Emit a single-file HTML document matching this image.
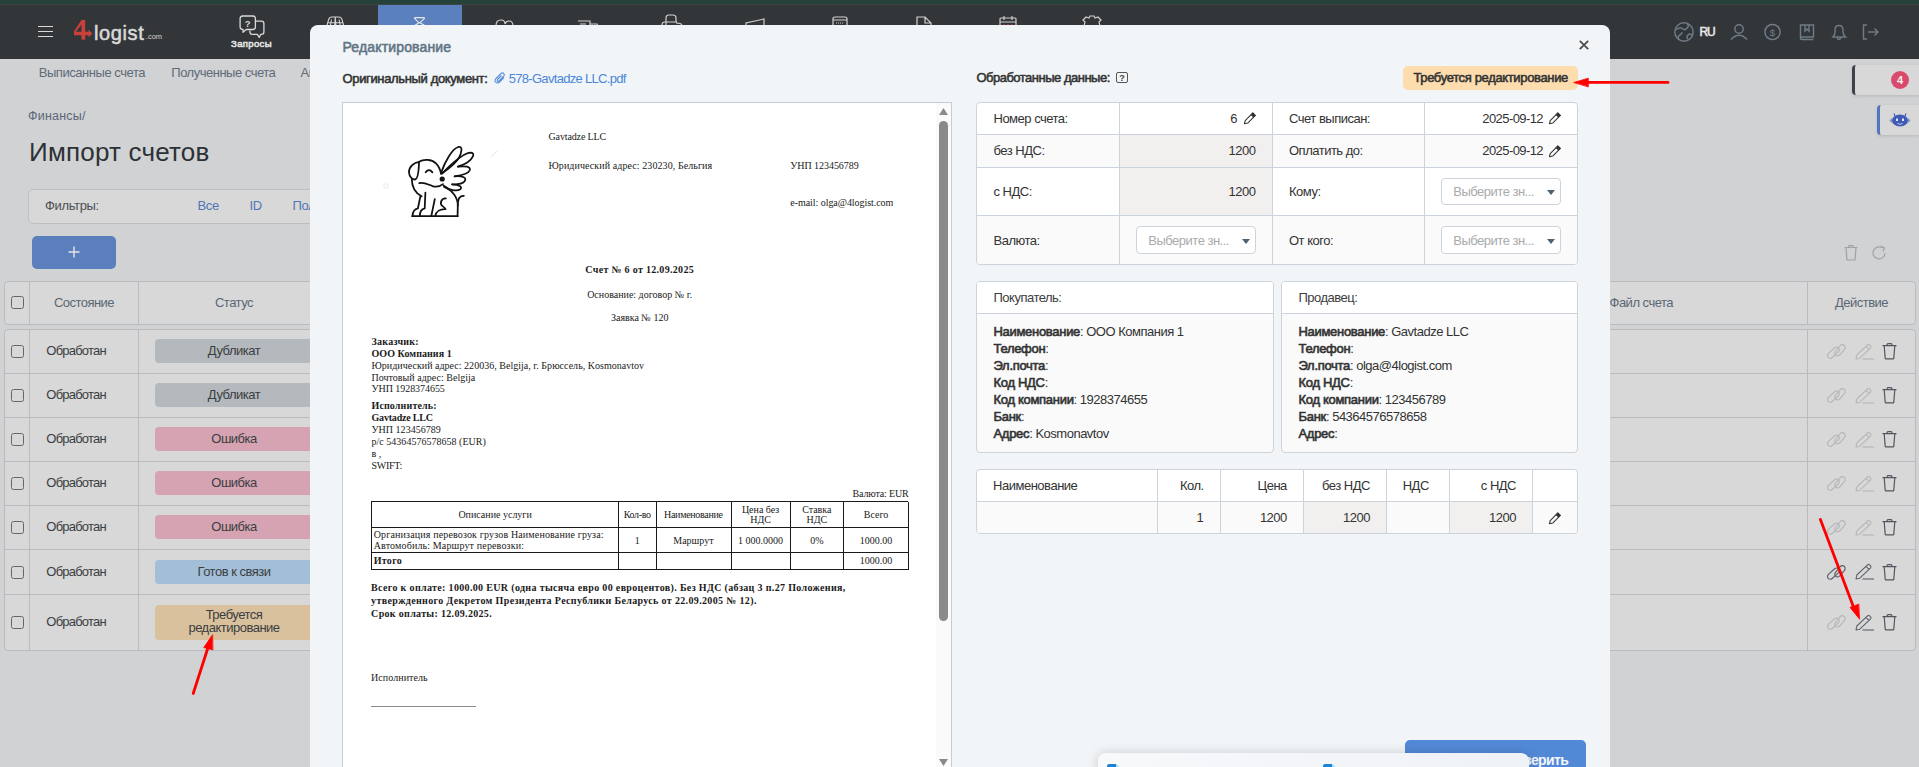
<!DOCTYPE html>
<html><head><meta charset="utf-8">
<style>
*{margin:0;padding:0;box-sizing:border-box}
html,body{width:1919px;height:767px;overflow:hidden}
body{position:relative;background:#d1d2d4;font-family:"Liberation Sans",sans-serif;color:#333}
.a{position:absolute}
.t{position:absolute;white-space:nowrap}
svg{position:absolute;overflow:visible}
</style></head><body>
<div class="a" style="left:0px;top:0px;width:1919px;height:4px;background:#26403a;"></div>
<div class="a" style="left:0px;top:4px;width:1919px;height:1px;background:#3e4543;"></div>
<div class="a" style="left:0px;top:5px;width:1919px;height:54px;background:#333639;"></div>
<div class="a" style="left:38px;top:26px;width:15px;height:1.3px;background:#d8d8d8;"></div>
<div class="a" style="left:38px;top:31px;width:15px;height:1.3px;background:#d8d8d8;"></div>
<div class="a" style="left:38px;top:36px;width:15px;height:1.3px;background:#d8d8d8;"></div>
<svg style="left:72px;top:19px;" width="22" height="22" viewBox="0 0 22 22">
<path d="M9.5 1 L13.2 1 L13.2 20.8 L9.5 20.8 L9.5 16.2 L2 16.2 L2 12.8 L9.5 12.8 L9.5 5.5 L3.8 12.8 L2 12.8 L2 12.2 Z" fill="#c8413b"/>
<path d="M13 12.8 L16.5 12.8 L16.5 10.8 L20.5 14.5 L16.5 18.2 L16.5 16.2 L13 16.2 Z" fill="#c8413b"/>
</svg>
<div class="t" style="top:22.67px;font-size:20px;line-height:20px;font-weight:400;-webkit-text-stroke:0.55px #d9d9d9;color:#d9d9d9;letter-spacing:0.6px;font-family:'Liberation Sans',sans-serif;left:94px;">logist</div>
<div class="t" style="top:33.25px;font-size:7.5px;line-height:7.5px;font-weight:400;color:#d0d0d0;letter-spacing:0px;font-family:'Liberation Sans',sans-serif;left:145.8px;">.com</div>
<svg style="left:238px;top:14px;" width="28" height="26" viewBox="0 0 28 26">
<path d="M4.6 2 L15 2 Q17.4 2 17.4 4.4 L17.4 13.1 Q17.4 15.5 15 15.5 L8.2 15.5 L5 18.3 L5 15.5 L4.6 15.5 Q2.1 15.5 2.1 13.1 L2.1 4.4 Q2.1 2 4.6 2 Z" fill="none" stroke="#d9d9d9" stroke-width="1.3" stroke-linejoin="round"/>
<path d="M17.6 7.2 L23.5 7.2 Q25.9 7.2 25.9 9.6 L25.9 18 Q25.9 20.4 23.5 20.4 L22.6 20.4 L21.3 23.4 L19.3 20.4 L14.3 20.4 Q11.9 20.4 11.9 18 L11.9 16.5" fill="none" stroke="#d9d9d9" stroke-width="1.3" stroke-linejoin="round"/>
<text x="9.7" y="12.6" font-size="9.5" font-weight="700" fill="#d9d9d9" text-anchor="middle" font-family="Liberation Sans">?</text>
</svg>
<div class="t" style="top:38.96px;font-size:9.5px;line-height:9.5px;font-weight:400;-webkit-text-stroke:0.55px #e6e6e6;color:#e6e6e6;letter-spacing:0.35px;font-family:'Liberation Sans',sans-serif;left:-348.5px;width:1200px;text-align:center;">Запросы</div>
<div class="a" style="left:378px;top:5px;width:84px;height:54px;background:#5a80bd;"></div>
<svg style="left:326px;top:16px;" width="20" height="10" viewBox="0 0 20 10"><path d="M0.8 10 L2.6 3.6 Q3.4 1 5.8 1 L12.8 1 Q15.2 1 16 3.6 L17.8 10 M9.3 1.5 L8.6 10 M9.3 1.5 L10 10 M2 6.8 L16.6 6.8 M5.5 3.5 L4.3 10 M13.1 3.5 L14.3 10" fill="none" stroke="#d6d6d6" stroke-width="1.1"/></svg>
<svg style="left:413px;top:17px;" width="14" height="9" viewBox="0 0 14 9"><path d="M1.5 1.3 Q1.5 0.6 2.4 0.6 L10.6 0.6 Q11.5 0.6 11.5 1.3 L7.6 5.2 Q6.5 6 5.4 5.2 Z M6.5 5.5 L0.8 9 M6.5 5.5 L12.6 9" fill="none" stroke="#e8e8e8" stroke-width="1.1" stroke-linejoin="round"/></svg>
<svg style="left:494px;top:18px;" width="20" height="8" viewBox="0 0 20 8"><path d="M2 8 Q2 2 7 2 Q11 2 11 6 Q12 3 15 3 Q19 3 19 8" fill="none" stroke="#d0d0d0" stroke-width="1.2"/></svg>
<svg style="left:577px;top:20px;" width="22" height="6" viewBox="0 0 22 6"><path d="M1 1 L13 1 L13 6 M3 4 L9 4 M13 4 L20 4 L21 6" fill="none" stroke="#d0d0d0" stroke-width="1.2"/></svg>
<svg style="left:661px;top:14px;" width="22" height="12" viewBox="0 0 22 12"><path d="M5 11 L5 4 Q5 1 8 1 L12 1 Q15 1 15 4 L15 8 M1 11 Q1 8 4 8 L16 8 M15 9 Q20 9 21 11" fill="none" stroke="#d0d0d0" stroke-width="1.2"/></svg>
<svg style="left:744px;top:18px;" width="22" height="8" viewBox="0 0 22 8"><path d="M2 8 L2 5 L20 1 L20 8" fill="none" stroke="#d0d0d0" stroke-width="1.2"/></svg>
<svg style="left:832px;top:16px;" width="16" height="10" viewBox="0 0 16 10"><path d="M1 10 L1 3 Q1 1 3 1 L13 1 Q15 1 15 3 L15 10 M1 4 L15 4" fill="none" stroke="#d0d0d0" stroke-width="1.2"/><path d="M4 7 L12 7" stroke="#d0d0d0" stroke-width="1" stroke-dasharray="1 1"/></svg>
<svg style="left:916px;top:16px;" width="16" height="10" viewBox="0 0 16 10"><path d="M1 10 L1 1 L9 1 L15 7 L15 10 M9 1 L9 7 L15 7" fill="none" stroke="#d0d0d0" stroke-width="1.2"/></svg>
<svg style="left:999px;top:15px;" width="18" height="11" viewBox="0 0 18 11"><path d="M1 11 L1 4 Q1 3 2 3 L16 3 Q17 3 17 4 L17 11 M1 7 L17 7 M5 1 L5 5 M13 1 L13 5" fill="none" stroke="#d0d0d0" stroke-width="1.2"/><path d="M4 10 L14 10" stroke="#c44" stroke-width="1" stroke-dasharray="2 2"/></svg>
<svg style="left:1082px;top:15px;" width="20" height="11" viewBox="0 0 20 11"><path d="M2 11 L3 7 L1 5 L4 2 L7 3 L8 1 L12 1 L13 3 L16 2 L19 5 L17 7 L18 11" fill="none" stroke="#d0d0d0" stroke-width="1.2"/></svg>
<svg style="left:1674px;top:22px;" width="20" height="20" viewBox="0 0 20 20"><circle cx="10" cy="10" r="9.2" fill="none" stroke="#6f7b85" stroke-width="1.45"/>
<path d="M2 8 Q6 4 9 7 Q11 9 14 5 Q15 3 13 1.5 M5 18 Q3 14 6 13 Q8 12 8 10 M18 13 Q16 11 14 13 Q12 15 14 17" fill="none" stroke="#6f7b85" stroke-width="1.45"/></svg>
<div class="t" style="top:26.04px;font-size:12px;line-height:12px;font-weight:400;-webkit-text-stroke:0.55px #e8e8e8;color:#e8e8e8;letter-spacing:-1.2px;font-family:'Liberation Sans',sans-serif;left:1699.5px;">RU</div>
<svg style="left:1730px;top:24px;" width="18" height="16" viewBox="0 0 18 16"><circle cx="9" cy="5" r="4.2" fill="none" stroke="#6f7b85" stroke-width="1.45"/><path d="M1 15.5 Q9 7 17 15.5" fill="none" stroke="#6f7b85" stroke-width="1.45"/></svg>
<svg style="left:1764px;top:24px;" width="17" height="16" viewBox="0 0 17 16"><circle cx="8.5" cy="8" r="7.6" fill="none" stroke="#6f7b85" stroke-width="1.45"/><text x="8.5" y="11.5" font-size="9.5" fill="#6f7b85" text-anchor="middle" font-family="Liberation Sans">$</text></svg>
<svg style="left:1799px;top:24px;" width="16" height="16" viewBox="0 0 16 16"><path d="M1.5 14 L1.5 1 L14.5 1 L14.5 13 L3 13 Q1.5 13 1.5 14.5 Q1.5 15.5 3 15.5 L14.5 15.5 M6 1 L6 7 L8 5 L10 7 L10 1" fill="none" stroke="#6f7b85" stroke-width="1.45"/></svg>
<svg style="left:1831px;top:24px;" width="16" height="17" viewBox="0 0 16 17"><path d="M2 13 Q4 11 4 8 L4 6 Q4 1.5 8 1.5 Q12 1.5 12 6 L12 8 Q12 11 14.5 13 Z M6 14 Q8 16.5 10 14" fill="none" stroke="#6f7b85" stroke-width="1.45"/></svg>
<svg style="left:1862px;top:24px;" width="17" height="16" viewBox="0 0 17 16"><path d="M5 1 L1.5 1 L1.5 15 L5 15 M6 8 L16 8 M12.5 4.5 L16 8 L12.5 11.5" fill="none" stroke="#6f7b85" stroke-width="1.45"/></svg>
<div class="t" style="top:65.70px;font-size:13px;line-height:13px;font-weight:400;color:#5e6b78;letter-spacing:-0.45px;font-family:'Liberation Sans',sans-serif;left:38.7px;">Выписанные счета</div>
<div class="t" style="top:65.70px;font-size:13px;line-height:13px;font-weight:400;color:#5e6b78;letter-spacing:-0.49px;font-family:'Liberation Sans',sans-serif;left:171.3px;">Полученные счета</div>
<div class="t" style="top:65.70px;font-size:13px;line-height:13px;font-weight:400;color:#5e6b78;letter-spacing:-0.45px;font-family:'Liberation Sans',sans-serif;left:300.5px;">Ак</div>
<div class="a" style="left:1852px;top:65px;width:67px;height:30px;background:#d8d8d8;border-radius:4px 0 0 4px;border-left:3px solid #3e404a;box-shadow:0 1px 3px rgba(0,0,0,0.12);"></div>
<div class="a" style="left:1891px;top:71px;width:18px;height:18px;border-radius:9px;background:#d94a6c;color:#f2f2f2;font:700 11px/18px Liberation Sans,sans-serif;text-align:center">4</div>
<div class="a" style="left:1877px;top:105px;width:42px;height:30px;background:#d8d8d8;border-radius:4px 0 0 4px;border-left:3px solid #4f76bf;box-shadow:0 1px 3px rgba(0,0,0,0.12);"></div>
<svg style="left:1889px;top:113px;" width="22" height="15" viewBox="0 0 22 15"><path d="M6 3 L5 0.5 M16 3 L17 0.5" stroke="#3f5bb5" stroke-width="1.2"/>
<path d="M3 5 L0.5 7.5 L3 10 Z M19 5 L21.5 7.5 L19 10 Z" fill="#7a94c9"/>
<ellipse cx="11" cy="7.5" rx="8" ry="6" fill="#3f5bb5"/>
<rect x="7" y="5.5" width="2" height="2.5" fill="#dfe6f5"/><rect x="13" y="5.5" width="2" height="2.5" fill="#dfe6f5"/>
<path d="M8.5 10.5 Q11 12 13.5 10.5" stroke="#dfe6f5" stroke-width="0.8" fill="none"/></svg>
<div class="t" style="top:110.22px;font-size:12.5px;line-height:12.5px;font-weight:400;color:#5a6774;letter-spacing:0.2px;font-family:'Liberation Sans',sans-serif;left:28px;">Финансы/</div>
<div class="t" style="top:139.29px;font-size:26px;line-height:26px;font-weight:400;color:#2c3136;letter-spacing:0.2px;font-family:'Liberation Sans',sans-serif;left:29px;">Импорт счетов</div>
<div class="a" style="left:28px;top:189px;width:1560px;height:34.5px;background:#d8d8d8;border:1px solid #bdbfc2;border-radius:5px;"></div>
<div class="t" style="top:199.20px;font-size:13px;line-height:13px;font-weight:400;color:#4b5056;letter-spacing:-0.35px;font-family:'Liberation Sans',sans-serif;left:45px;">Фильтры:</div>
<div class="t" style="top:199.20px;font-size:13px;line-height:13px;font-weight:400;color:#5276b3;letter-spacing:-0.3px;font-family:'Liberation Sans',sans-serif;left:197.5px;">Все</div>
<div class="t" style="top:199.20px;font-size:13px;line-height:13px;font-weight:400;color:#5276b3;letter-spacing:-0.3px;font-family:'Liberation Sans',sans-serif;left:249.4px;">ID</div>
<div class="t" style="top:199.20px;font-size:13px;line-height:13px;font-weight:400;color:#5276b3;letter-spacing:-0.3px;font-family:'Liberation Sans',sans-serif;left:292.4px;">Пол</div>
<div class="a" style="left:32px;top:236px;width:84px;height:33px;background:#5a7fbc;border-radius:5px;"></div>
<svg style="left:68px;top:246px;" width="12" height="12" viewBox="0 0 12 12"><path d="M6 0.5 L6 11.5 M0.5 6 L11.5 6" stroke="#e6e6e6" stroke-width="1.4"/></svg>
<svg style="left:1844px;top:245px;" width="14" height="16" viewBox="0 0 14 16"><path d="M0.5 2.5 L13.5 2.5 M4.5 2.5 L5 0.7 L9 0.7 L9.5 2.5 M2 2.5 L3 15 L11 15 L12 2.5" fill="none" stroke="#9ea3a8" stroke-width="1.2"/></svg>
<svg style="left:1872px;top:245px;" width="15" height="16" viewBox="0 0 15 16"><path d="M13 8 A6 6 0 1 1 10.5 3" fill="none" stroke="#9ea3a8" stroke-width="1.2"/><path d="M9 1 L12.5 3 L11 6.5" fill="none" stroke="#9ea3a8" stroke-width="1.2"/></svg>
<div class="a" style="left:4px;top:281px;width:1912px;height:44px;background:#d8d8d8;border:1px solid #b8bcc0;border-radius:4px;"></div>
<div class="a" style="left:29px;top:281px;width:1px;height:44px;background:#b8bcc0;"></div>
<div class="a" style="left:138px;top:281px;width:1px;height:44px;background:#b8bcc0;"></div>
<div class="a" style="left:1807px;top:281px;width:1px;height:44px;background:#b8bcc0;"></div>
<div class="a" style="left:11px;top:296px;width:13px;height:13px;background:none;border:1.2px solid #646769;border-radius:2.5px;"></div>
<div class="t" style="top:296.00px;font-size:13px;line-height:13px;font-weight:400;color:#5a6774;letter-spacing:-0.55px;font-family:'Liberation Sans',sans-serif;left:-516px;width:1200px;text-align:center;">Состояние</div>
<div class="t" style="top:296.00px;font-size:13px;line-height:13px;font-weight:400;color:#5a6774;letter-spacing:-0.5px;font-family:'Liberation Sans',sans-serif;left:-366px;width:1200px;text-align:center;">Статус</div>
<div class="t" style="top:296.00px;font-size:13px;line-height:13px;font-weight:400;color:#5a6774;letter-spacing:-0.5px;font-family:'Liberation Sans',sans-serif;left:1609.5px;">Файл счета</div>
<div class="t" style="top:296.00px;font-size:13px;line-height:13px;font-weight:400;color:#5a6774;letter-spacing:-0.5px;font-family:'Liberation Sans',sans-serif;left:1261.5px;width:1200px;text-align:center;">Действие</div>
<div class="a" style="left:4px;top:329px;width:1912px;height:322px;background:#d8d8d8;border:1px solid #b8bcc0;border-radius:4px;"></div>
<div class="a" style="left:4px;top:373px;width:1912px;height:1px;background:#b8bcc0;"></div>
<div class="a" style="left:4px;top:417px;width:1912px;height:1px;background:#b8bcc0;"></div>
<div class="a" style="left:4px;top:461px;width:1912px;height:1px;background:#b8bcc0;"></div>
<div class="a" style="left:4px;top:505px;width:1912px;height:1px;background:#b8bcc0;"></div>
<div class="a" style="left:4px;top:549px;width:1912px;height:1px;background:#b8bcc0;"></div>
<div class="a" style="left:4px;top:594px;width:1912px;height:1px;background:#b8bcc0;"></div>
<div class="a" style="left:29px;top:329px;width:1px;height:322px;background:#b8bcc0;"></div>
<div class="a" style="left:138px;top:329px;width:1px;height:322px;background:#b8bcc0;"></div>
<div class="a" style="left:1807px;top:329px;width:1px;height:322px;background:#b8bcc0;"></div>
<div class="a" style="left:11px;top:345.0px;width:13px;height:13px;background:none;border:1.2px solid #646769;border-radius:2.5px;"></div>
<div class="t" style="top:344.20px;font-size:13px;line-height:13px;font-weight:400;color:#3b3e41;letter-spacing:-0.78px;font-family:'Liberation Sans',sans-serif;left:46.3px;">Обработан</div>
<div class="a" style="left:155px;top:339.0px;width:200px;height:24px;background:#b3b9bd;border-radius:4px;"></div>
<div class="t" style="top:344.20px;font-size:13px;line-height:13px;font-weight:400;color:#3b3e41;letter-spacing:-0.5px;font-family:'Liberation Sans',sans-serif;left:-366px;width:1200px;text-align:center;">Дубликат</div>
<svg style="left:1826px;top:343.0px;" width="21" height="16" viewBox="0 0 21 16"><g fill="none" stroke="#b5b7ba" stroke-width="1.2"><rect x="-7" y="-2.8" width="14" height="5.6" rx="2.8" transform="translate(7.4 9.6) rotate(-42)"/><rect x="-6.5" y="-2.8" width="13" height="5.6" rx="2.8" transform="translate(14 7.3) rotate(-50)"/></g></svg>
<svg style="left:1855px;top:342.5px;" width="20" height="17" viewBox="0 0 20 17"><path d="M7.5 16 L19 16" stroke="#b5b7ba" stroke-width="1.1"/><path d="M1 16 L1.8 12 L12.6 1.8 Q13.6 0.9 14.6 1.8 L15.6 2.8 Q16.4 3.8 15.6 4.8 L4.8 15.2 Z M11 3.4 L14 6.4" fill="none" stroke="#b5b7ba" stroke-width="1.1" stroke-linejoin="round"/></svg>
<svg style="left:1882px;top:343.0px;" width="15" height="17" viewBox="0 0 15 17"><path d="M0.5 2.7 L14.5 2.7 M5 2.7 L5.3 1 Q5.5 0.6 6 0.6 L9 0.6 Q9.5 0.6 9.7 1 L10 2.7 M2.2 2.7 L3.2 15.2 Q3.3 15.9 4 15.9 L11 15.9 Q11.7 15.9 11.8 15.2 L12.8 2.7" fill="none" stroke="#50575e" stroke-width="1.2"/></svg>
<div class="a" style="left:11px;top:389.0px;width:13px;height:13px;background:none;border:1.2px solid #646769;border-radius:2.5px;"></div>
<div class="t" style="top:388.20px;font-size:13px;line-height:13px;font-weight:400;color:#3b3e41;letter-spacing:-0.78px;font-family:'Liberation Sans',sans-serif;left:46.3px;">Обработан</div>
<div class="a" style="left:155px;top:383.0px;width:200px;height:24px;background:#b3b9bd;border-radius:4px;"></div>
<div class="t" style="top:388.20px;font-size:13px;line-height:13px;font-weight:400;color:#3b3e41;letter-spacing:-0.5px;font-family:'Liberation Sans',sans-serif;left:-366px;width:1200px;text-align:center;">Дубликат</div>
<svg style="left:1826px;top:387.0px;" width="21" height="16" viewBox="0 0 21 16"><g fill="none" stroke="#b5b7ba" stroke-width="1.2"><rect x="-7" y="-2.8" width="14" height="5.6" rx="2.8" transform="translate(7.4 9.6) rotate(-42)"/><rect x="-6.5" y="-2.8" width="13" height="5.6" rx="2.8" transform="translate(14 7.3) rotate(-50)"/></g></svg>
<svg style="left:1855px;top:386.5px;" width="20" height="17" viewBox="0 0 20 17"><path d="M7.5 16 L19 16" stroke="#b5b7ba" stroke-width="1.1"/><path d="M1 16 L1.8 12 L12.6 1.8 Q13.6 0.9 14.6 1.8 L15.6 2.8 Q16.4 3.8 15.6 4.8 L4.8 15.2 Z M11 3.4 L14 6.4" fill="none" stroke="#b5b7ba" stroke-width="1.1" stroke-linejoin="round"/></svg>
<svg style="left:1882px;top:387.0px;" width="15" height="17" viewBox="0 0 15 17"><path d="M0.5 2.7 L14.5 2.7 M5 2.7 L5.3 1 Q5.5 0.6 6 0.6 L9 0.6 Q9.5 0.6 9.7 1 L10 2.7 M2.2 2.7 L3.2 15.2 Q3.3 15.9 4 15.9 L11 15.9 Q11.7 15.9 11.8 15.2 L12.8 2.7" fill="none" stroke="#50575e" stroke-width="1.2"/></svg>
<div class="a" style="left:11px;top:433.0px;width:13px;height:13px;background:none;border:1.2px solid #646769;border-radius:2.5px;"></div>
<div class="t" style="top:432.20px;font-size:13px;line-height:13px;font-weight:400;color:#3b3e41;letter-spacing:-0.78px;font-family:'Liberation Sans',sans-serif;left:46.3px;">Обработан</div>
<div class="a" style="left:155px;top:427.0px;width:200px;height:24px;background:#d6a3b2;border-radius:4px;"></div>
<div class="t" style="top:432.20px;font-size:13px;line-height:13px;font-weight:400;color:#3b3e41;letter-spacing:-0.5px;font-family:'Liberation Sans',sans-serif;left:-366px;width:1200px;text-align:center;">Ошибка</div>
<svg style="left:1826px;top:431.0px;" width="21" height="16" viewBox="0 0 21 16"><g fill="none" stroke="#b5b7ba" stroke-width="1.2"><rect x="-7" y="-2.8" width="14" height="5.6" rx="2.8" transform="translate(7.4 9.6) rotate(-42)"/><rect x="-6.5" y="-2.8" width="13" height="5.6" rx="2.8" transform="translate(14 7.3) rotate(-50)"/></g></svg>
<svg style="left:1855px;top:430.5px;" width="20" height="17" viewBox="0 0 20 17"><path d="M7.5 16 L19 16" stroke="#b5b7ba" stroke-width="1.1"/><path d="M1 16 L1.8 12 L12.6 1.8 Q13.6 0.9 14.6 1.8 L15.6 2.8 Q16.4 3.8 15.6 4.8 L4.8 15.2 Z M11 3.4 L14 6.4" fill="none" stroke="#b5b7ba" stroke-width="1.1" stroke-linejoin="round"/></svg>
<svg style="left:1882px;top:431.0px;" width="15" height="17" viewBox="0 0 15 17"><path d="M0.5 2.7 L14.5 2.7 M5 2.7 L5.3 1 Q5.5 0.6 6 0.6 L9 0.6 Q9.5 0.6 9.7 1 L10 2.7 M2.2 2.7 L3.2 15.2 Q3.3 15.9 4 15.9 L11 15.9 Q11.7 15.9 11.8 15.2 L12.8 2.7" fill="none" stroke="#50575e" stroke-width="1.2"/></svg>
<div class="a" style="left:11px;top:477.0px;width:13px;height:13px;background:none;border:1.2px solid #646769;border-radius:2.5px;"></div>
<div class="t" style="top:476.20px;font-size:13px;line-height:13px;font-weight:400;color:#3b3e41;letter-spacing:-0.78px;font-family:'Liberation Sans',sans-serif;left:46.3px;">Обработан</div>
<div class="a" style="left:155px;top:471.0px;width:200px;height:24px;background:#d6a3b2;border-radius:4px;"></div>
<div class="t" style="top:476.20px;font-size:13px;line-height:13px;font-weight:400;color:#3b3e41;letter-spacing:-0.5px;font-family:'Liberation Sans',sans-serif;left:-366px;width:1200px;text-align:center;">Ошибка</div>
<svg style="left:1826px;top:475.0px;" width="21" height="16" viewBox="0 0 21 16"><g fill="none" stroke="#b5b7ba" stroke-width="1.2"><rect x="-7" y="-2.8" width="14" height="5.6" rx="2.8" transform="translate(7.4 9.6) rotate(-42)"/><rect x="-6.5" y="-2.8" width="13" height="5.6" rx="2.8" transform="translate(14 7.3) rotate(-50)"/></g></svg>
<svg style="left:1855px;top:474.5px;" width="20" height="17" viewBox="0 0 20 17"><path d="M7.5 16 L19 16" stroke="#b5b7ba" stroke-width="1.1"/><path d="M1 16 L1.8 12 L12.6 1.8 Q13.6 0.9 14.6 1.8 L15.6 2.8 Q16.4 3.8 15.6 4.8 L4.8 15.2 Z M11 3.4 L14 6.4" fill="none" stroke="#b5b7ba" stroke-width="1.1" stroke-linejoin="round"/></svg>
<svg style="left:1882px;top:475.0px;" width="15" height="17" viewBox="0 0 15 17"><path d="M0.5 2.7 L14.5 2.7 M5 2.7 L5.3 1 Q5.5 0.6 6 0.6 L9 0.6 Q9.5 0.6 9.7 1 L10 2.7 M2.2 2.7 L3.2 15.2 Q3.3 15.9 4 15.9 L11 15.9 Q11.7 15.9 11.8 15.2 L12.8 2.7" fill="none" stroke="#50575e" stroke-width="1.2"/></svg>
<div class="a" style="left:11px;top:521.0px;width:13px;height:13px;background:none;border:1.2px solid #646769;border-radius:2.5px;"></div>
<div class="t" style="top:520.20px;font-size:13px;line-height:13px;font-weight:400;color:#3b3e41;letter-spacing:-0.78px;font-family:'Liberation Sans',sans-serif;left:46.3px;">Обработан</div>
<div class="a" style="left:155px;top:515.0px;width:200px;height:24px;background:#d6a3b2;border-radius:4px;"></div>
<div class="t" style="top:520.20px;font-size:13px;line-height:13px;font-weight:400;color:#3b3e41;letter-spacing:-0.5px;font-family:'Liberation Sans',sans-serif;left:-366px;width:1200px;text-align:center;">Ошибка</div>
<svg style="left:1826px;top:519.0px;" width="21" height="16" viewBox="0 0 21 16"><g fill="none" stroke="#b5b7ba" stroke-width="1.2"><rect x="-7" y="-2.8" width="14" height="5.6" rx="2.8" transform="translate(7.4 9.6) rotate(-42)"/><rect x="-6.5" y="-2.8" width="13" height="5.6" rx="2.8" transform="translate(14 7.3) rotate(-50)"/></g></svg>
<svg style="left:1855px;top:518.5px;" width="20" height="17" viewBox="0 0 20 17"><path d="M7.5 16 L19 16" stroke="#b5b7ba" stroke-width="1.1"/><path d="M1 16 L1.8 12 L12.6 1.8 Q13.6 0.9 14.6 1.8 L15.6 2.8 Q16.4 3.8 15.6 4.8 L4.8 15.2 Z M11 3.4 L14 6.4" fill="none" stroke="#b5b7ba" stroke-width="1.1" stroke-linejoin="round"/></svg>
<svg style="left:1882px;top:519.0px;" width="15" height="17" viewBox="0 0 15 17"><path d="M0.5 2.7 L14.5 2.7 M5 2.7 L5.3 1 Q5.5 0.6 6 0.6 L9 0.6 Q9.5 0.6 9.7 1 L10 2.7 M2.2 2.7 L3.2 15.2 Q3.3 15.9 4 15.9 L11 15.9 Q11.7 15.9 11.8 15.2 L12.8 2.7" fill="none" stroke="#50575e" stroke-width="1.2"/></svg>
<div class="a" style="left:11px;top:565.5px;width:13px;height:13px;background:none;border:1.2px solid #646769;border-radius:2.5px;"></div>
<div class="t" style="top:564.70px;font-size:13px;line-height:13px;font-weight:400;color:#3b3e41;letter-spacing:-0.78px;font-family:'Liberation Sans',sans-serif;left:46.3px;">Обработан</div>
<div class="a" style="left:155px;top:559.5px;width:200px;height:24px;background:#a3bed7;border-radius:4px;"></div>
<div class="t" style="top:564.70px;font-size:13px;line-height:13px;font-weight:400;color:#3b3e41;letter-spacing:-0.5px;font-family:'Liberation Sans',sans-serif;left:-366px;width:1200px;text-align:center;">Готов к связи</div>
<svg style="left:1826px;top:563.5px;" width="21" height="16" viewBox="0 0 21 16"><g fill="none" stroke="#5c636b" stroke-width="1.2"><rect x="-7" y="-2.8" width="14" height="5.6" rx="2.8" transform="translate(7.4 9.6) rotate(-42)"/><rect x="-6.5" y="-2.8" width="13" height="5.6" rx="2.8" transform="translate(14 7.3) rotate(-50)"/></g></svg>
<svg style="left:1855px;top:563.0px;" width="20" height="17" viewBox="0 0 20 17"><path d="M7.5 16 L19 16" stroke="#5c636b" stroke-width="1.1"/><path d="M1 16 L1.8 12 L12.6 1.8 Q13.6 0.9 14.6 1.8 L15.6 2.8 Q16.4 3.8 15.6 4.8 L4.8 15.2 Z M11 3.4 L14 6.4" fill="none" stroke="#5c636b" stroke-width="1.1" stroke-linejoin="round"/></svg>
<svg style="left:1882px;top:563.5px;" width="15" height="17" viewBox="0 0 15 17"><path d="M0.5 2.7 L14.5 2.7 M5 2.7 L5.3 1 Q5.5 0.6 6 0.6 L9 0.6 Q9.5 0.6 9.7 1 L10 2.7 M2.2 2.7 L3.2 15.2 Q3.3 15.9 4 15.9 L11 15.9 Q11.7 15.9 11.8 15.2 L12.8 2.7" fill="none" stroke="#50575e" stroke-width="1.2"/></svg>
<div class="a" style="left:11px;top:616.0px;width:13px;height:13px;background:none;border:1.2px solid #646769;border-radius:2.5px;"></div>
<div class="t" style="top:615.20px;font-size:13px;line-height:13px;font-weight:400;color:#3b3e41;letter-spacing:-0.78px;font-family:'Liberation Sans',sans-serif;left:46.3px;">Обработан</div>
<div class="a" style="left:155px;top:604.5px;width:200px;height:35.5px;background:#d9c19e;border-radius:4px;"></div>
<div class="t" style="top:609.00px;font-size:13px;line-height:13px;font-weight:400;color:#3b3e41;letter-spacing:-0.5px;font-family:'Liberation Sans',sans-serif;left:-366px;width:1200px;text-align:center;line-height:12px;">Требуется</div>
<div class="t" style="top:621.00px;font-size:13px;line-height:13px;font-weight:400;color:#3b3e41;letter-spacing:-0.5px;font-family:'Liberation Sans',sans-serif;left:-366px;width:1200px;text-align:center;">редактирование</div>
<svg style="left:1826px;top:614.0px;" width="21" height="16" viewBox="0 0 21 16"><g fill="none" stroke="#b5b7ba" stroke-width="1.2"><rect x="-7" y="-2.8" width="14" height="5.6" rx="2.8" transform="translate(7.4 9.6) rotate(-42)"/><rect x="-6.5" y="-2.8" width="13" height="5.6" rx="2.8" transform="translate(14 7.3) rotate(-50)"/></g></svg>
<svg style="left:1855px;top:613.5px;" width="20" height="17" viewBox="0 0 20 17"><path d="M7.5 16 L19 16" stroke="#5c636b" stroke-width="1.1"/><path d="M1 16 L1.8 12 L12.6 1.8 Q13.6 0.9 14.6 1.8 L15.6 2.8 Q16.4 3.8 15.6 4.8 L4.8 15.2 Z M11 3.4 L14 6.4" fill="none" stroke="#5c636b" stroke-width="1.1" stroke-linejoin="round"/></svg>
<svg style="left:1882px;top:614.0px;" width="15" height="17" viewBox="0 0 15 17"><path d="M0.5 2.7 L14.5 2.7 M5 2.7 L5.3 1 Q5.5 0.6 6 0.6 L9 0.6 Q9.5 0.6 9.7 1 L10 2.7 M2.2 2.7 L3.2 15.2 Q3.3 15.9 4 15.9 L11 15.9 Q11.7 15.9 11.8 15.2 L12.8 2.7" fill="none" stroke="#50575e" stroke-width="1.2"/></svg>
<div class="a" style="left:310px;top:25px;width:1300px;height:800px;background:#f1f5f8;border-radius:8px"></div>
<div class="t" style="top:40.35px;font-size:14px;line-height:14px;font-weight:400;-webkit-text-stroke:0.55px #5f7485;color:#5f7485;letter-spacing:0.15px;font-family:'Liberation Sans',sans-serif;left:342.5px;">Редактирование</div>
<svg style="left:1579px;top:40px;" width="10" height="10" viewBox="0 0 10 10"><path d="M0.8 0.8 L9.2 9.2 M9.2 0.8 L0.8 9.2" stroke="#4d4d4d" stroke-width="1.8"/></svg>
<div class="t" style="top:71.50px;font-size:13px;line-height:13px;font-weight:400;-webkit-text-stroke:0.55px #333;color:#333;letter-spacing:-0.35px;font-family:'Liberation Sans',sans-serif;left:342.5px;">Оригинальный документ:</div>
<svg style="left:494px;top:72px;" width="12" height="12" viewBox="0 0 12 12"><path d="M10 5.5 L5.5 10 Q3.5 12 1.8 10.2 Q0 8.5 2 6.5 L7 1.5 Q8.5 0.2 9.8 1.5 Q11 2.8 9.7 4.2 L5 9 Q4.2 9.7 3.5 9 Q2.8 8.3 3.5 7.5 L7.5 3.5" fill="none" stroke="#5b8fd9" stroke-width="1.1"/></svg>
<div class="t" style="top:71.50px;font-size:13px;line-height:13px;font-weight:400;color:#4a87d9;letter-spacing:-0.69px;font-family:'Liberation Sans',sans-serif;left:508.7px;">578-Gavtadze LLC.pdf</div>
<div class="a" style="left:342px;top:102px;width:610px;height:700px;background:#ffffff;border:1px solid #c8cdd5;"></div>
<div class="a" style="left:936px;top:103px;width:15px;height:700px;background:#fafafa;"></div>
<svg style="left:939px;top:108px;" width="9" height="7" viewBox="0 0 9 7"><path d="M4.5 0 L9 7 L0 7 Z" fill="#8a8a8a"/></svg>
<div class="a" style="left:939px;top:121px;width:9px;height:500px;background:#8a8a8a;border-radius:4.5px;"></div>
<svg style="left:939px;top:759px;" width="9" height="7" viewBox="0 0 9 7"><path d="M0 0 L9 0 L4.5 7 Z" fill="#8a8a8a"/></svg>
<div class="t" style="top:71.00px;font-size:13px;line-height:13px;font-weight:400;-webkit-text-stroke:0.55px #333;color:#333;letter-spacing:-0.5px;font-family:'Liberation Sans',sans-serif;left:976.4px;">Обработанные данные:</div>
<div class="a" style="left:1116.2px;top:72.2px;width:11.7px;height:11.3px;background:none;border:1px solid #555;border-radius:2px;"></div>
<div class="t" style="top:73.88px;font-size:9px;line-height:9px;font-weight:700;color:#444;letter-spacing:0px;font-family:'Liberation Sans',sans-serif;left:522px;width:1200px;text-align:center;">?</div>
<div class="a" style="left:1403px;top:66px;width:175px;height:24px;background:#fddcae;border-radius:5px;"></div>
<div class="t" style="top:71.10px;font-size:13px;line-height:13px;font-weight:400;-webkit-text-stroke:0.55px #333;color:#333;letter-spacing:-0.35px;font-family:'Liberation Sans',sans-serif;left:1413.4px;">Требуется редактирование</div>
<div class="a" style="left:976px;top:102px;width:602px;height:163px;border:1px solid #cdd3dc;border-radius:4px;overflow:hidden;background:#fff">
<div class="a" style="left:0.0px;top:32.0px;width:602.0px;height:33.0px;background:#fafafa"></div>
<div class="a" style="left:0.0px;top:113.0px;width:602.0px;height:50.0px;background:#fafafa"></div>
<div class="a" style="left:143.0px;top:32.0px;width:153.0px;height:81.0px;background:#f1f0ef"></div>
<div class="a" style="left:0.0px;top:31.0px;width:602.0px;height:1.0px;background:#cdd3dc"></div>
<div class="a" style="left:0.0px;top:64.0px;width:602.0px;height:1.0px;background:#cdd3dc"></div>
<div class="a" style="left:0.0px;top:112.0px;width:602.0px;height:1.0px;background:#cdd3dc"></div>
<div class="a" style="left:142.0px;top:0.0px;width:1.0px;height:163.0px;background:#cdd3dc"></div>
<div class="a" style="left:295.0px;top:0.0px;width:1.0px;height:163.0px;background:#cdd3dc"></div>
<div class="a" style="left:447.0px;top:0.0px;width:1.0px;height:163.0px;background:#cdd3dc"></div>
</div>
<div class="t" style="top:111.70px;font-size:13px;line-height:13px;font-weight:400;color:#333;letter-spacing:-0.5px;font-family:'Liberation Sans',sans-serif;left:993.5px;">Номер счета:</div>
<div class="t" style="top:111.70px;font-size:13px;line-height:13px;font-weight:400;color:#333;letter-spacing:-0.5px;font-family:'Liberation Sans',sans-serif;left:1289px;">Счет выписан:</div>
<div class="t" style="top:144.30px;font-size:13px;line-height:13px;font-weight:400;color:#333;letter-spacing:-0.5px;font-family:'Liberation Sans',sans-serif;left:993.5px;">без НДС:</div>
<div class="t" style="top:144.30px;font-size:13px;line-height:13px;font-weight:400;color:#333;letter-spacing:-0.5px;font-family:'Liberation Sans',sans-serif;left:1289px;">Оплатить до:</div>
<div class="t" style="top:185.00px;font-size:13px;line-height:13px;font-weight:400;color:#333;letter-spacing:-0.5px;font-family:'Liberation Sans',sans-serif;left:993.5px;">с НДС:</div>
<div class="t" style="top:185.00px;font-size:13px;line-height:13px;font-weight:400;color:#333;letter-spacing:-0.5px;font-family:'Liberation Sans',sans-serif;left:1289px;">Кому:</div>
<div class="t" style="top:233.50px;font-size:13px;line-height:13px;font-weight:400;color:#333;letter-spacing:-0.5px;font-family:'Liberation Sans',sans-serif;left:993.5px;">Валюта:</div>
<div class="t" style="top:233.50px;font-size:13px;line-height:13px;font-weight:400;color:#333;letter-spacing:-0.5px;font-family:'Liberation Sans',sans-serif;left:1289px;">От кого:</div>
<div class="t" style="top:111.70px;font-size:13px;line-height:13px;font-weight:400;color:#333;letter-spacing:0px;font-family:'Liberation Sans',sans-serif;right:681.5px;">6</div>
<svg style="left:1244px;top:113.0px;" width="13" height="12" viewBox="0 0 13 12"><g transform="scale(0.93)"><path d="M0.5 11.5 L1.3 8.1 L9.5 -0.1 L12.2 2.6 L4 10.8 Z" fill="none" stroke="#333" stroke-width="1.15" stroke-linejoin="round"/><path d="M7.5 1.9 L9.5 -0.1 L12.2 2.6 L10.2 4.6 Z" fill="#333" stroke="#333" stroke-width="0.9" stroke-linejoin="round"/></g></svg>
<div class="t" style="top:144.30px;font-size:13px;line-height:13px;font-weight:400;color:#333;letter-spacing:-0.5px;font-family:'Liberation Sans',sans-serif;right:663.5px;">1200</div>
<div class="t" style="top:185.00px;font-size:13px;line-height:13px;font-weight:400;color:#333;letter-spacing:-0.5px;font-family:'Liberation Sans',sans-serif;right:663.5px;">1200</div>
<div class="t" style="top:111.70px;font-size:13px;line-height:13px;font-weight:400;color:#333;letter-spacing:-0.58px;font-family:'Liberation Sans',sans-serif;right:376px;">2025-09-12</div>
<svg style="left:1549px;top:113.0px;" width="13" height="12" viewBox="0 0 13 12"><g transform="scale(0.93)"><path d="M0.5 11.5 L1.3 8.1 L9.5 -0.1 L12.2 2.6 L4 10.8 Z" fill="none" stroke="#333" stroke-width="1.15" stroke-linejoin="round"/><path d="M7.5 1.9 L9.5 -0.1 L12.2 2.6 L10.2 4.6 Z" fill="#333" stroke="#333" stroke-width="0.9" stroke-linejoin="round"/></g></svg>
<div class="t" style="top:144.30px;font-size:13px;line-height:13px;font-weight:400;color:#333;letter-spacing:-0.58px;font-family:'Liberation Sans',sans-serif;right:376px;">2025-09-12</div>
<svg style="left:1549px;top:145.59999999999997px;" width="13" height="12" viewBox="0 0 13 12"><g transform="scale(0.93)"><path d="M0.5 11.5 L1.3 8.1 L9.5 -0.1 L12.2 2.6 L4 10.8 Z" fill="none" stroke="#333" stroke-width="1.15" stroke-linejoin="round"/><path d="M7.5 1.9 L9.5 -0.1 L12.2 2.6 L10.2 4.6 Z" fill="#333" stroke="#333" stroke-width="0.9" stroke-linejoin="round"/></g></svg>
<div class="a" style="left:1136px;top:226.3px;width:120px;height:27.5px;background:#fff;border:1px solid #ccd3dc;border-radius:4px;"></div>
<div class="t" style="top:233.65px;font-size:13px;line-height:13px;font-weight:400;color:#a9abad;letter-spacing:-0.5px;font-family:'Liberation Sans',sans-serif;left:1148.3px;">Выберите зн...</div>
<svg style="left:1242px;top:239.05px;" width="8" height="5" viewBox="0 0 8 5"><path d="M0 0 L8 0 L4 5 Z" fill="#4f6272"/></svg>
<div class="a" style="left:1441px;top:177.5px;width:120px;height:27.5px;background:#fff;border:1px solid #ccd3dc;border-radius:4px;"></div>
<div class="t" style="top:184.85px;font-size:13px;line-height:13px;font-weight:400;color:#a9abad;letter-spacing:-0.5px;font-family:'Liberation Sans',sans-serif;left:1453.3px;">Выберите зн...</div>
<svg style="left:1547px;top:190.25px;" width="8" height="5" viewBox="0 0 8 5"><path d="M0 0 L8 0 L4 5 Z" fill="#4f6272"/></svg>
<div class="a" style="left:1441px;top:226.3px;width:120px;height:27.5px;background:#fff;border:1px solid #ccd3dc;border-radius:4px;"></div>
<div class="t" style="top:233.65px;font-size:13px;line-height:13px;font-weight:400;color:#a9abad;letter-spacing:-0.5px;font-family:'Liberation Sans',sans-serif;left:1453.3px;">Выберите зн...</div>
<svg style="left:1547px;top:239.05px;" width="8" height="5" viewBox="0 0 8 5"><path d="M0 0 L8 0 L4 5 Z" fill="#4f6272"/></svg>
<div class="a" style="left:976px;top:281px;width:298px;height:172px;border:1px solid #cdd3dc;border-radius:4px;overflow:hidden;background:#fafafa"><div class="a" style="left:0;top:0;width:100%;height:32px;background:#fff;border-bottom:1px solid #cdd3dc"></div></div>
<div class="t" style="top:290.70px;font-size:13px;line-height:13px;font-weight:400;color:#3d3d3d;letter-spacing:-0.5px;font-family:'Liberation Sans',sans-serif;left:993.5px;">Покупатель:</div>
<div class="t" style="left:993.5px;top:324.60px;font-size:13px;line-height:13px;color:#333;letter-spacing:-0.5px;font-family:Liberation Sans,sans-serif"><b style="font-weight:400;-webkit-text-stroke:0.6px #333;letter-spacing:-0.3px">Наименование</b>: ООО Компания 1</div>
<div class="t" style="left:993.5px;top:341.65px;font-size:13px;line-height:13px;color:#333;letter-spacing:-0.5px;font-family:Liberation Sans,sans-serif"><b style="font-weight:400;-webkit-text-stroke:0.6px #333;letter-spacing:-0.3px">Телефон</b>:</div>
<div class="t" style="left:993.5px;top:358.70px;font-size:13px;line-height:13px;color:#333;letter-spacing:-0.5px;font-family:Liberation Sans,sans-serif"><b style="font-weight:400;-webkit-text-stroke:0.6px #333;letter-spacing:-0.3px">Эл.почта</b>:</div>
<div class="t" style="left:993.5px;top:375.75px;font-size:13px;line-height:13px;color:#333;letter-spacing:-0.5px;font-family:Liberation Sans,sans-serif"><b style="font-weight:400;-webkit-text-stroke:0.6px #333;letter-spacing:-0.3px">Код НДС</b>:</div>
<div class="t" style="left:993.5px;top:392.80px;font-size:13px;line-height:13px;color:#333;letter-spacing:-0.5px;font-family:Liberation Sans,sans-serif"><b style="font-weight:400;-webkit-text-stroke:0.6px #333;letter-spacing:-0.3px">Код компании</b>: 1928374655</div>
<div class="t" style="left:993.5px;top:409.85px;font-size:13px;line-height:13px;color:#333;letter-spacing:-0.5px;font-family:Liberation Sans,sans-serif"><b style="font-weight:400;-webkit-text-stroke:0.6px #333;letter-spacing:-0.3px">Банк</b>:</div>
<div class="t" style="left:993.5px;top:426.90px;font-size:13px;line-height:13px;color:#333;letter-spacing:-0.5px;font-family:Liberation Sans,sans-serif"><b style="font-weight:400;-webkit-text-stroke:0.6px #333;letter-spacing:-0.3px">Адрес</b>: Kosmonavtov</div>
<div class="a" style="left:1281px;top:281px;width:297px;height:172px;border:1px solid #cdd3dc;border-radius:4px;overflow:hidden;background:#fafafa"><div class="a" style="left:0;top:0;width:100%;height:32px;background:#fff;border-bottom:1px solid #cdd3dc"></div></div>
<div class="t" style="top:290.70px;font-size:13px;line-height:13px;font-weight:400;color:#3d3d3d;letter-spacing:-0.5px;font-family:'Liberation Sans',sans-serif;left:1298.5px;">Продавец:</div>
<div class="t" style="left:1298.5px;top:324.60px;font-size:13px;line-height:13px;color:#333;letter-spacing:-0.5px;font-family:Liberation Sans,sans-serif"><b style="font-weight:400;-webkit-text-stroke:0.6px #333;letter-spacing:-0.3px">Наименование</b>: Gavtadze LLC</div>
<div class="t" style="left:1298.5px;top:341.65px;font-size:13px;line-height:13px;color:#333;letter-spacing:-0.5px;font-family:Liberation Sans,sans-serif"><b style="font-weight:400;-webkit-text-stroke:0.6px #333;letter-spacing:-0.3px">Телефон</b>:</div>
<div class="t" style="left:1298.5px;top:358.70px;font-size:13px;line-height:13px;color:#333;letter-spacing:-0.5px;font-family:Liberation Sans,sans-serif"><b style="font-weight:400;-webkit-text-stroke:0.6px #333;letter-spacing:-0.3px">Эл.почта</b>: olga@4logist.com</div>
<div class="t" style="left:1298.5px;top:375.75px;font-size:13px;line-height:13px;color:#333;letter-spacing:-0.5px;font-family:Liberation Sans,sans-serif"><b style="font-weight:400;-webkit-text-stroke:0.6px #333;letter-spacing:-0.3px">Код НДС</b>:</div>
<div class="t" style="left:1298.5px;top:392.80px;font-size:13px;line-height:13px;color:#333;letter-spacing:-0.5px;font-family:Liberation Sans,sans-serif"><b style="font-weight:400;-webkit-text-stroke:0.6px #333;letter-spacing:-0.3px">Код компании</b>: 123456789</div>
<div class="t" style="left:1298.5px;top:409.85px;font-size:13px;line-height:13px;color:#333;letter-spacing:-0.5px;font-family:Liberation Sans,sans-serif"><b style="font-weight:400;-webkit-text-stroke:0.6px #333;letter-spacing:-0.3px">Банк</b>: 54364576578658</div>
<div class="t" style="left:1298.5px;top:426.90px;font-size:13px;line-height:13px;color:#333;letter-spacing:-0.5px;font-family:Liberation Sans,sans-serif"><b style="font-weight:400;-webkit-text-stroke:0.6px #333;letter-spacing:-0.3px">Адрес</b>:</div>
<div class="a" style="left:976px;top:469px;width:602.0px;height:65.0px;border:1px solid #cdd3dc;border-radius:4px;overflow:hidden;background:#fff">
<div class="a" style="left:0.0px;top:32.0px;width:602.0px;height:33.0px;background:#fafafa"></div>
<div class="a" style="left:327.0px;top:32.0px;width:83.0px;height:33.0px;background:#f1f0ef"></div>
<div class="a" style="left:473.0px;top:32.0px;width:83.0px;height:33.0px;background:#f1f0ef"></div>
<div class="a" style="left:0.0px;top:31.0px;width:602.0px;height:1.0px;background:#cdd3dc"></div>
<div class="a" style="left:180.0px;top:0.0px;width:1.0px;height:65.0px;background:#cdd3dc"></div>
<div class="a" style="left:243.0px;top:0.0px;width:1.0px;height:65.0px;background:#cdd3dc"></div>
<div class="a" style="left:326.0px;top:0.0px;width:1.0px;height:65.0px;background:#cdd3dc"></div>
<div class="a" style="left:409.0px;top:0.0px;width:1.0px;height:65.0px;background:#cdd3dc"></div>
<div class="a" style="left:472.0px;top:0.0px;width:1.0px;height:65.0px;background:#cdd3dc"></div>
<div class="a" style="left:555.0px;top:0.0px;width:1.0px;height:65.0px;background:#cdd3dc"></div>
</div>
<div class="t" style="top:479.30px;font-size:13px;line-height:13px;font-weight:400;color:#333;letter-spacing:-0.48px;font-family:'Liberation Sans',sans-serif;left:993px;">Наименование</div>
<div class="t" style="top:479.30px;font-size:13px;line-height:13px;font-weight:400;color:#333;letter-spacing:-0.5px;font-family:'Liberation Sans',sans-serif;right:715.3px;">Кол.</div>
<div class="t" style="top:479.30px;font-size:13px;line-height:13px;font-weight:400;color:#333;letter-spacing:-0.5px;font-family:'Liberation Sans',sans-serif;right:632.2px;">Цена</div>
<div class="t" style="top:479.30px;font-size:13px;line-height:13px;font-weight:400;color:#333;letter-spacing:-0.5px;font-family:'Liberation Sans',sans-serif;right:549.0999999999999px;">без НДС</div>
<div class="t" style="top:479.30px;font-size:13px;line-height:13px;font-weight:400;color:#333;letter-spacing:-0.5px;font-family:'Liberation Sans',sans-serif;left:1402.7px;">НДС</div>
<div class="t" style="top:479.30px;font-size:13px;line-height:13px;font-weight:400;color:#333;letter-spacing:-0.5px;font-family:'Liberation Sans',sans-serif;right:403px;">с НДС</div>
<div class="t" style="top:511.00px;font-size:13px;line-height:13px;font-weight:400;color:#333;letter-spacing:0px;font-family:'Liberation Sans',sans-serif;right:715.3px;">1</div>
<div class="t" style="top:511.00px;font-size:13px;line-height:13px;font-weight:400;color:#333;letter-spacing:-0.5px;font-family:'Liberation Sans',sans-serif;right:632.2px;">1200</div>
<div class="t" style="top:511.00px;font-size:13px;line-height:13px;font-weight:400;color:#333;letter-spacing:-0.5px;font-family:'Liberation Sans',sans-serif;right:549.0999999999999px;">1200</div>
<div class="t" style="top:511.00px;font-size:13px;line-height:13px;font-weight:400;color:#333;letter-spacing:-0.5px;font-family:'Liberation Sans',sans-serif;right:403px;">1200</div>
<svg style="left:1549px;top:512.6px;" width="13" height="12" viewBox="0 0 13 12"><g transform="scale(0.93)"><path d="M0.5 11.5 L1.3 8.1 L9.5 -0.1 L12.2 2.6 L4 10.8 Z" fill="none" stroke="#333" stroke-width="1.15" stroke-linejoin="round"/><path d="M7.5 1.9 L9.5 -0.1 L12.2 2.6 L10.2 4.6 Z" fill="#333" stroke="#333" stroke-width="0.9" stroke-linejoin="round"/></g></svg>
<div class="a" style="left:1405px;top:740px;width:181px;height:40px;background:#5289d7;border-radius:5px;"></div>
<div class="t" style="top:752.65px;font-size:14px;line-height:14px;font-weight:700;color:#f2f6fb;letter-spacing:-0.6px;font-family:'Liberation Sans',sans-serif;right:350.70000000000005px;">Проверить</div>
<div class="a" style="left:1098px;top:753px;width:431px;height:40px;border-radius:8px;background:linear-gradient(90deg,#f7f9fb,#eef1f6);box-shadow:0 0 12px rgba(0,0,0,0.16)"></div>
<div class="a" style="left:1107px;top:764px;width:9px;height:6px;background:#1f82d2;border-radius:2px 0 0 0;"></div>
<svg style="left:1116px;top:764px;" width="4" height="4" viewBox="0 0 4 4"><path d="M0 0 L0.5 0 L4 3.5 L4 4 L0 4 Z" fill="#9fe3f7"/></svg>
<div class="a" style="left:1323px;top:764px;width:9px;height:6px;background:#1f82d2;border-radius:2px 0 0 0;"></div>
<svg style="left:1332px;top:764px;" width="4" height="4" viewBox="0 0 4 4"><path d="M0 0 L0.5 0 L4 3.5 L4 4 L0 4 Z" fill="#9fe3f7"/></svg>
<div class="t" style="top:131.62px;font-size:10px;line-height:10px;font-weight:400;color:#1a1a1a;letter-spacing:-0.13px;font-family:'Liberation Serif',serif;left:548.5px;">Gavtadze LLC</div>
<div class="t" style="top:160.62px;font-size:10px;line-height:10px;font-weight:400;color:#1a1a1a;letter-spacing:0.08px;font-family:'Liberation Serif',serif;left:548.5px;">Юридический адрес: 230230, Бельгия</div>
<div class="t" style="top:160.62px;font-size:10px;line-height:10px;font-weight:400;color:#1a1a1a;letter-spacing:-0.05px;font-family:'Liberation Serif',serif;left:790.3px;">УНП 123456789</div>
<div class="t" style="top:197.62px;font-size:10px;line-height:10px;font-weight:400;color:#1a1a1a;letter-spacing:-0.05px;font-family:'Liberation Serif',serif;left:790.3px;">e-mail: olga@4logist.com</div>
<div class="t" style="top:265.12px;font-size:10px;line-height:10px;font-weight:700;color:#1a1a1a;letter-spacing:0.31px;font-family:'Liberation Serif',serif;left:39.700000000000045px;width:1200px;text-align:center;">Счет № 6 от 12.09.2025</div>
<div class="t" style="top:289.52px;font-size:10px;line-height:10px;font-weight:400;color:#1a1a1a;letter-spacing:0px;font-family:'Liberation Serif',serif;left:39.700000000000045px;width:1200px;text-align:center;">Основание: договор № г.</div>
<div class="t" style="top:313.02px;font-size:10px;line-height:10px;font-weight:400;color:#1a1a1a;letter-spacing:0px;font-family:'Liberation Serif',serif;left:39.700000000000045px;width:1200px;text-align:center;">Заявка № 120</div>
<div class="t" style="top:336.82px;font-size:10px;line-height:10px;font-weight:700;color:#1a1a1a;letter-spacing:0.25px;font-family:'Liberation Serif',serif;left:371.5px;">Заказчик:</div>
<div class="t" style="top:348.73px;font-size:10px;line-height:10px;font-weight:700;color:#1a1a1a;letter-spacing:0.06px;font-family:'Liberation Serif',serif;left:371.5px;">ООО Компания 1</div>
<div class="t" style="top:360.62px;font-size:10px;line-height:10px;font-weight:400;color:#1a1a1a;letter-spacing:0.02px;font-family:'Liberation Serif',serif;left:371.5px;">Юридический адрес: 220036, Belgija, г. Брюссель, Kosmonavtov</div>
<div class="t" style="top:372.73px;font-size:10px;line-height:10px;font-weight:400;color:#1a1a1a;letter-spacing:0.02px;font-family:'Liberation Serif',serif;left:371.5px;">Почтовый адрес: Belgija</div>
<div class="t" style="top:384.23px;font-size:10px;line-height:10px;font-weight:400;color:#1a1a1a;letter-spacing:-0.05px;font-family:'Liberation Serif',serif;left:371.5px;">УНП 1928374655</div>
<div class="t" style="top:401.32px;font-size:10px;line-height:10px;font-weight:700;color:#1a1a1a;letter-spacing:0.13px;font-family:'Liberation Serif',serif;left:371.5px;">Исполнитель:</div>
<div class="t" style="top:413.43px;font-size:10px;line-height:10px;font-weight:700;color:#1a1a1a;letter-spacing:-0.19px;font-family:'Liberation Serif',serif;left:371.5px;">Gavtadze LLC</div>
<div class="t" style="top:424.93px;font-size:10px;line-height:10px;font-weight:400;color:#1a1a1a;letter-spacing:0.02px;font-family:'Liberation Serif',serif;left:371.5px;">УНП 123456789</div>
<div class="t" style="top:437.43px;font-size:10px;line-height:10px;font-weight:400;color:#1a1a1a;letter-spacing:0.02px;font-family:'Liberation Serif',serif;left:371.5px;">р/с 54364576578658 (EUR)</div>
<div class="t" style="top:448.82px;font-size:10px;line-height:10px;font-weight:400;color:#1a1a1a;letter-spacing:0.02px;font-family:'Liberation Serif',serif;left:371.5px;">в ,</div>
<div class="t" style="top:460.73px;font-size:10px;line-height:10px;font-weight:400;color:#1a1a1a;letter-spacing:-0.3px;font-family:'Liberation Serif',serif;left:371.5px;">SWIFT:</div>
<div class="t" style="top:489.12px;font-size:10px;line-height:10px;font-weight:400;color:#1a1a1a;letter-spacing:-0.15px;font-family:'Liberation Serif',serif;right:1010.4px;">Валюта: EUR</div>
<div class="a" style="left:371.1px;top:501.4px;width:536.9px;height:1.1px;background:#1a1a1a;"></div>
<div class="a" style="left:371.1px;top:527.1px;width:536.9px;height:1.1px;background:#1a1a1a;"></div>
<div class="a" style="left:371.1px;top:552.2px;width:536.9px;height:1.1px;background:#1a1a1a;"></div>
<div class="a" style="left:371.1px;top:569.1px;width:536.9px;height:1.1px;background:#1a1a1a;"></div>
<div class="a" style="left:370.6px;top:501.9px;width:1.1px;height:67.70000000000005px;background:#1a1a1a;"></div>
<div class="a" style="left:617.7px;top:501.9px;width:1.1px;height:67.70000000000005px;background:#1a1a1a;"></div>
<div class="a" style="left:655.7px;top:501.9px;width:1.1px;height:67.70000000000005px;background:#1a1a1a;"></div>
<div class="a" style="left:730.7px;top:501.9px;width:1.1px;height:67.70000000000005px;background:#1a1a1a;"></div>
<div class="a" style="left:789.6px;top:501.9px;width:1.1px;height:67.70000000000005px;background:#1a1a1a;"></div>
<div class="a" style="left:843.0px;top:501.9px;width:1.1px;height:67.70000000000005px;background:#1a1a1a;"></div>
<div class="a" style="left:907.5px;top:501.9px;width:1.1px;height:67.70000000000005px;background:#1a1a1a;"></div>
<div class="t" style="top:510.12px;font-size:10px;line-height:10px;font-weight:400;color:#1a1a1a;letter-spacing:0px;font-family:'Liberation Serif',serif;left:-104.89999999999998px;width:1200px;text-align:center;">Описание услуги</div>
<div class="t" style="top:510.12px;font-size:10px;line-height:10px;font-weight:400;color:#1a1a1a;letter-spacing:-0.35px;font-family:'Liberation Serif',serif;left:37.200000000000045px;width:1200px;text-align:center;">Кол-во</div>
<div class="t" style="top:510.12px;font-size:10px;line-height:10px;font-weight:400;color:#1a1a1a;letter-spacing:-0.3px;font-family:'Liberation Serif',serif;left:93.39999999999998px;width:1200px;text-align:center;">Наименование</div>
<div class="t" style="top:504.92px;font-size:10px;line-height:10px;font-weight:400;color:#1a1a1a;letter-spacing:0px;font-family:'Liberation Serif',serif;left:160.60000000000002px;width:1200px;text-align:center;">Цена без</div>
<div class="t" style="top:515.12px;font-size:10px;line-height:10px;font-weight:400;color:#1a1a1a;letter-spacing:0px;font-family:'Liberation Serif',serif;left:160.60000000000002px;width:1200px;text-align:center;">НДС</div>
<div class="t" style="top:504.92px;font-size:10px;line-height:10px;font-weight:400;color:#1a1a1a;letter-spacing:0px;font-family:'Liberation Serif',serif;left:216.79999999999995px;width:1200px;text-align:center;">Ставка</div>
<div class="t" style="top:515.12px;font-size:10px;line-height:10px;font-weight:400;color:#1a1a1a;letter-spacing:0px;font-family:'Liberation Serif',serif;left:216.79999999999995px;width:1200px;text-align:center;">НДС</div>
<div class="t" style="top:510.12px;font-size:10px;line-height:10px;font-weight:400;color:#1a1a1a;letter-spacing:0px;font-family:'Liberation Serif',serif;left:276px;width:1200px;text-align:center;">Всего</div>
<div class="t" style="top:530.02px;font-size:10px;line-height:10px;font-weight:400;color:#1a1a1a;letter-spacing:0.15px;font-family:'Liberation Serif',serif;left:373.7px;">Организация перевозок грузов Наименование груза:</div>
<div class="t" style="top:540.83px;font-size:10px;line-height:10px;font-weight:400;color:#1a1a1a;letter-spacing:0.15px;font-family:'Liberation Serif',serif;left:373.7px;">Автомобиль: Маршрут перевозки:</div>
<div class="t" style="top:535.52px;font-size:10px;line-height:10px;font-weight:400;color:#1a1a1a;letter-spacing:0px;font-family:'Liberation Serif',serif;left:37.200000000000045px;width:1200px;text-align:center;">1</div>
<div class="t" style="top:535.52px;font-size:10px;line-height:10px;font-weight:400;color:#1a1a1a;letter-spacing:0px;font-family:'Liberation Serif',serif;left:93.39999999999998px;width:1200px;text-align:center;">Маршрут</div>
<div class="t" style="top:535.52px;font-size:10px;line-height:10px;font-weight:400;color:#1a1a1a;letter-spacing:0px;font-family:'Liberation Serif',serif;left:160.60000000000002px;width:1200px;text-align:center;">1 000.0000</div>
<div class="t" style="top:535.52px;font-size:10px;line-height:10px;font-weight:400;color:#1a1a1a;letter-spacing:0px;font-family:'Liberation Serif',serif;left:216.79999999999995px;width:1200px;text-align:center;">0%</div>
<div class="t" style="top:535.52px;font-size:10px;line-height:10px;font-weight:400;color:#1a1a1a;letter-spacing:0px;font-family:'Liberation Serif',serif;left:276px;width:1200px;text-align:center;">1000.00</div>
<div class="t" style="top:556.23px;font-size:10px;line-height:10px;font-weight:700;color:#1a1a1a;letter-spacing:0.3px;font-family:'Liberation Serif',serif;left:373.7px;">Итого</div>
<div class="t" style="top:556.23px;font-size:10px;line-height:10px;font-weight:400;color:#1a1a1a;letter-spacing:0px;font-family:'Liberation Serif',serif;left:276px;width:1200px;text-align:center;">1000.00</div>
<div class="t" style="top:583.12px;font-size:10px;line-height:10px;font-weight:700;color:#1a1a1a;letter-spacing:0.34px;font-family:'Liberation Serif',serif;left:371.1px;">Всего к оплате: 1000.00 EUR (одна тысяча евро 00 евроцентов). Без НДС (абзац 3 п.27 Положения,</div>
<div class="t" style="top:595.62px;font-size:10px;line-height:10px;font-weight:700;color:#1a1a1a;letter-spacing:0.35px;font-family:'Liberation Serif',serif;left:371.1px;">утвержденного Декретом Президента Республики Беларусь от 22.09.2005 № 12).</div>
<div class="t" style="top:609.33px;font-size:10px;line-height:10px;font-weight:700;color:#1a1a1a;letter-spacing:0.32px;font-family:'Liberation Serif',serif;left:371.1px;">Срок оплаты: 12.09.2025.</div>
<div class="t" style="top:672.62px;font-size:10px;line-height:10px;font-weight:400;color:#1a1a1a;letter-spacing:0.07px;font-family:'Liberation Serif',serif;left:371px;">Исполнитель</div>
<div class="a" style="left:371px;top:705.5px;width:105px;height:0.8px;background:#8a8a8a;"></div>
<svg style="left:370px;top:135px;" width="140" height="90" viewBox="0 0 140 90"><g transform="scale(0.11737)" fill="none" stroke="#111" stroke-width="15" stroke-linecap="round" stroke-linejoin="round"><path d="M418 228 C372 232 330 275 332 318 C334 355 362 385 386 378 C406 371 416 300 418 228 Z"/><path d="M418 228 C455 205 525 205 562 242 C586 266 600 300 606 332"/><path d="M474 318 Q502 282 532 318"/><path d="M420 410 C452 398 492 420 532 435 C572 447 600 436 622 418"/><path d="M356 372 C356 432 384 492 440 522"/><path d="M428 528 L408 626 C384 630 364 648 362 692"/><path d="M472 490 L466 626 C440 632 424 650 424 692"/><path d="M552 546 L522 692"/><path d="M646 540 C604 538 592 588 618 606 C632 616 642 625 644 632 C600 630 562 650 556 692"/><path d="M630 440 C700 470 748 530 748 600 L746 692"/><path d="M748 600 C748 550 760 515 800 518"/><path d="M360 692 L746 692"/><path d="M606 322 C640 222 700 118 752 102 C792 92 782 142 762 186 C738 236 666 290 612 328"/><path d="M616 326 C700 240 800 150 860 150 C902 155 872 205 832 232 C800 252 770 262 750 270"/><path d="M750 270 C810 262 860 268 850 300 C838 332 770 345 720 352"/><path d="M722 352 C790 348 830 362 805 395 C785 418 740 422 700 420"/><path d="M700 420 C760 425 790 440 770 462 C740 482 670 470 628 432"/></g><circle cx="72.2" cy="44" r="2.6" fill="#111"/></svg>
<svg style="left:383px;top:183px;" width="6" height="6" viewBox="0 0 6 6"><circle cx="3" cy="3" r="2.2" fill="none" stroke="#e4e4e4" stroke-width="0.9"/></svg>
<svg style="left:490px;top:150px;" width="8" height="8" viewBox="0 0 8 8"><path d="M1 7 L7 1" stroke="#e6e6e6" stroke-width="1"/></svg>
<svg style="left:0;top:0" width="1919" height="767" viewBox="0 0 1919 767"><g stroke="#ff0000" stroke-width="2.8" stroke-linecap="round" fill="#ff0000"><line x1="193.2" y1="693.5" x2="208.5" y2="646"/><path d="M212.4 635 L203.7 647.6 L212.6 649.8 Z" stroke-width="0.8" stroke-linejoin="round"/><line x1="1820.4" y1="519.4" x2="1853.5" y2="607"/><path d="M1859.4 619 L1850 607.4 L1858.5 604.2 Z" stroke-width="0.8" stroke-linejoin="round"/><line x1="1668" y1="82.4" x2="1586" y2="82.4"/><path d="M1574 82.4 L1588.3 78.2 L1588.3 86.6 Z" stroke-width="0.8" stroke-linejoin="round"/></g></svg>
<div id="ENDMARK"></div>
</body></html>
